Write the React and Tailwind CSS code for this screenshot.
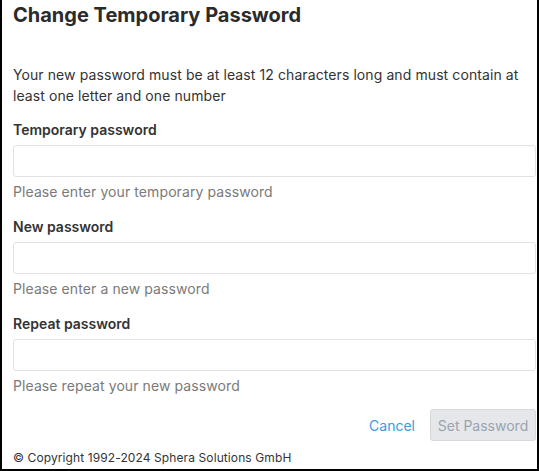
import React from "react";

const fields = [
  { label: "Temporary password", hint: "Please enter your temporary password" },
  { label: "New password", hint: "Please enter a new password" },
  { label: "Repeat password", hint: "Please repeat your new password" },
];

const App = () => {
  return (
    <div className="w-[539px] h-[471px] bg-white border-l-2 border-r-2 border-b-2 border-black font-['Inter',sans-serif] text-[#333] pl-[11px] pr-[1px] flex flex-col">
      <h1 className="text-[20px] leading-[28px] font-bold text-[#2b2b2b] mt-px">
        Change Temporary Password
      </h1>

      <p className="text-[14px] leading-[21px] tracking-[0.09px] mt-[35px]">
        Your new password must be at least 12 characters long and must contain at least one letter and one number
      </p>

      <div className="mt-[14px] flex flex-col gap-[15px]">
        {fields.map((f, i) => (
          <div key={i} className="flex flex-col">
            <label className="text-[14px] leading-[20px] font-semibold">{f.label}</label>
            <input
              type="password"
              className="mt-[5px] h-[32px] w-full rounded-[3px] border border-[#dfe3e8] outline-none px-2"
            />
            <span className="mt-[5px] text-[14px] leading-[20px] tracking-[0.09px] text-[#7a7a7a]">{f.hint}</span>
          </div>
        ))}
      </div>

      <div className="mt-[13px] flex justify-end items-center gap-[15px]">
        <button className="text-[14px] text-[#3a9be0]">Cancel</button>
        <button
          disabled
          className="h-[32px] w-[106px] rounded-[3px] border border-[#d5d9de] bg-[#e5e7eb] text-[14px] text-[#9aa3ae]"
        >
          Set Password
        </button>
      </div>

      <div className="mt-[7px] text-[12px] leading-[20px] tracking-[0.1px] text-[#333]">
        © Copyright 1992-2024 Sphera Solutions GmbH
      </div>
    </div>
  );
};

export default App;
